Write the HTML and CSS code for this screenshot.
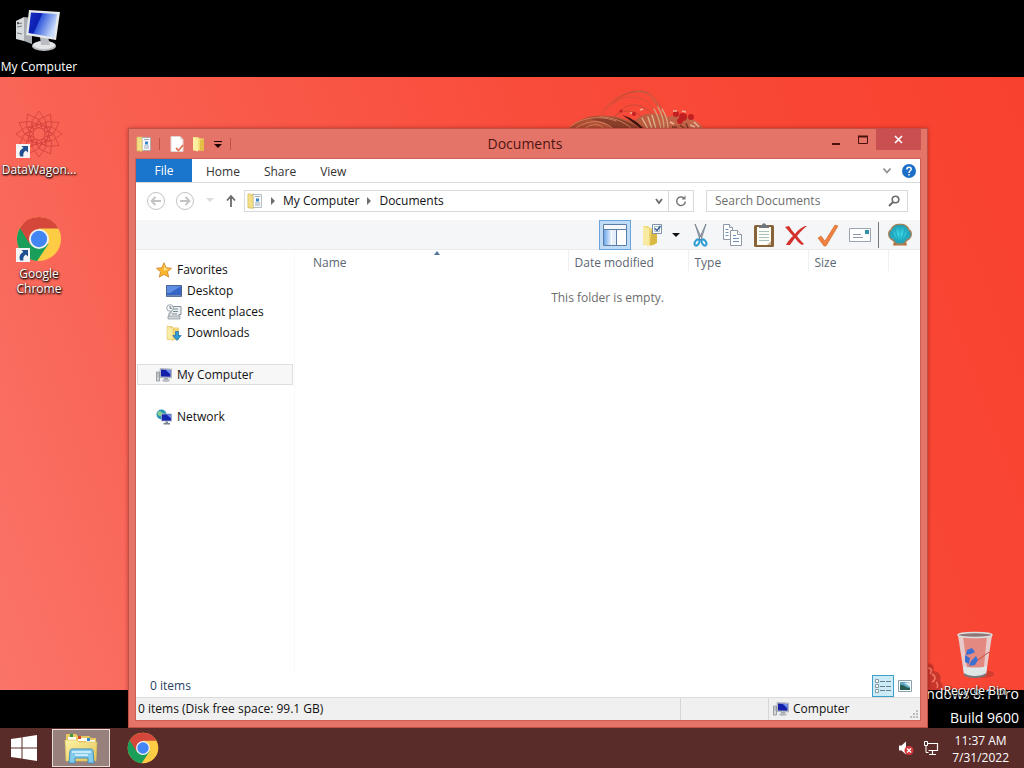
FILE: index.html
```html
<!DOCTYPE html>
<html lang="en">
<head>
  <meta charset="UTF-8">
  <meta name="viewport" content="width=device-width, initial-scale=1.0">
  <title>Documents</title>
  <link rel="stylesheet" href="styles.css">
</head>
<body>
  <!-- shared icons -->
  <svg class="sprites" width="0" height="0" aria-hidden="true">
    <defs>
      <linearGradient id="screen" x1="0" y1="0" x2="1" y2="0.4">
        <stop offset="0" stop-color="#1a2fc4"/>
        <stop offset="0.42" stop-color="#0a1fb0"/>
        <stop offset="0.45" stop-color="#3058dc"/>
        <stop offset="1" stop-color="#c9ddfa"/>
      </linearGradient>
      <linearGradient id="folder" x1="0" y1="0" x2="1" y2="1">
        <stop offset="0" stop-color="#fdf3a8"/>
        <stop offset="1" stop-color="#e3c354"/>
      </linearGradient>
      <linearGradient id="pane" x1="0" y1="0" x2="1" y2="0">
        <stop offset="0" stop-color="#6fa6ea"/>
        <stop offset="1" stop-color="#e4effb"/>
      </linearGradient>
      <radialGradient id="shell" cx=".5" cy=".5" r=".6">
        <stop offset="0" stop-color="#3fdcec"/>
        <stop offset="1" stop-color="#128da6"/>
      </radialGradient>
      <linearGradient id="hair-fill" x1="0" y1="0" x2="1" y2="0">
        <stop offset="0" stop-color="#a9482e"/>
        <stop offset=".4" stop-color="#b8593c"/>
        <stop offset="1" stop-color="#c8694c"/>
      </linearGradient>
    </defs>
    <symbol id="i-folder" viewBox="0 0 16 16">
      <path d="M1 1h6v14H1z" fill="url(#folder)" stroke="#d8c069" stroke-width=".6"/>
      <path d="M6 1.500h8.500v13H6z" fill="#f6f8fa" stroke="#9aa3ad" stroke-width=".7"/>
      <path d="M8 3.500h5M8 10h5M8 12h5" stroke="#8a9bb0" stroke-width=".8"/>
      <path d="M9 5.500h3v3H9z" fill="#3b84c8"/>
      <path d="M1 1l5 2v12.500L1 14z" fill="#f3df86" stroke="#d2b95c" stroke-width=".5"/>
    </symbol>
    <symbol id="i-computer" viewBox="0 0 16 16">
      <path d="M.5 5h3v9h-3z" fill="#d5d8db" stroke="#7c8288" stroke-width=".7"/>
      <path d="M1.500 7h1M1.500 9h1" stroke="#555" stroke-width=".7"/>
      <path d="M4 1.500l11.500.5v9L4 10.500z" fill="#c5c9d0" stroke="#8b9098" stroke-width=".5"/>
      <path d="M5 2.500l9.500.500v6.800L5 9.500z" fill="#1420a8"/>
      <path d="M9.500 2.800l5 .2v4.500z" fill="#6f8ff0"/>
      <path d="M8 11h4v2H8z" fill="#a4a8ad"/>
      <ellipse cx="10" cy="13.600" rx="4" ry="1.300" fill="#b9bdc2"/>
    </symbol>
    <symbol id="i-chrome" viewBox="0 0 48 48">
      <circle cx="24" cy="24" r="23" fill="#fdcb44"/>
      <path d="M24 24L4.100 12.500A23 23 0 0 0 22 46.900L34 29z" fill="#1a9f5b"/>
      <path d="M24 13h20.200A23 23 0 0 0 4.100 12.500L14.500 29.500z" fill="#d4473a"/>
      <circle cx="24" cy="24" r="10.500" fill="#f1f1f1"/>
      <circle cx="24" cy="24" r="8.500" fill="#4285f4"/>
    </symbol>
    <symbol id="i-shortcut" viewBox="0 0 14 14">
      <path d="M0 0h14v14H0z" fill="#f4f4f4"/>
      <path d="M5.500 2H12v6.500L9.800 6.400C7.500 8 7 9.700 7.400 12.500H4.200C2.600 8.800 4 5.600 7.400 4.100z" fill="#1e4f8f"/>
    </symbol>
  </svg>

  <main class="desktop">
    <div class="wallpaper">
      <svg class="hair" width="144" height="42" viewBox="0 0 144 42" aria-hidden="true">
        <path d="M4 42C14 31 30 27 44 29C54 28 62 34 70 34C78 26 90 24 104 30C118 26 134 32 140 42z" fill="url(#hair-fill)"/>
        <path d="M26 32C42 27 64 32 76 42H50C44 36 36 34 26 32z" fill="#8a3f2a"/>
        <g fill="none" stroke-linecap="round" stroke-width=".8">
          <path d="M6 40C18 30 36 28 52 34M12 41C24 33 38 32 48 41M20 42C28 36 36 36 40 42M36 30C48 30 60 34 68 42" stroke="#d98a68"/>
          <path d="M38 28C42 14 62 3 78 4C90 6 98 18 102 34" stroke="#c5543c"/>
          <path d="M42 22C54 10 66 8 78 12C88 16 92 26 94 38" stroke="#c5543c"/>
          <path d="M48 17C58 6 74 2 84 6M54 26C64 14 78 16 90 28M50 30C58 22 70 22 78 30" stroke="#b84b34"/>
          <path d="M70 5C84 2 94 12 100 34M88 12C94 18 98 26 101 38" stroke="#b4694a"/>
          <path d="M98 22C102 28 104 34 104 42M94 20C98 27 100 34 100 42M90 22C95 30 96 36 97 42" stroke="#d8a07a" stroke-width="1.400"/>
          <path d="M78 31L84 42M84 30L88 42M88 28L92 42" stroke="#ddb08c" stroke-width="1.400"/>
        </g>
        <path d="M58 28C66 30 74 35 80 42h-3C71 37 65 32 58 28z" fill="#3f1410"/>
        <g fill="#c21f22">
          <circle cx="112" cy="27" r="3"/><circle cx="119" cy="30" r="4"/><circle cx="116" cy="34" r="3"/><circle cx="127" cy="30" r="3"/><circle cx="57" cy="24" r="1.500"/><circle cx="70" cy="27" r="2"/>
        </g>
        <path d="M109 24h4M118 24l4 1M106 35l4 2M126 38l5 2M130 35l5 5M76 23l3-1M66 26h2" stroke="#eeb49c" stroke-width="1.500"/>
        <path d="M116 38l4 3M122 36l2 5M108 40h5" stroke="#7c3a28" stroke-width="1.500"/>
      </svg>
      <svg class="petals" width="18" height="30" viewBox="0 0 18 30" aria-hidden="true">
        <path d="M0 4c8-2 9 4 7 7c7 0 9 6 7 10c3 3 3 6 2 9H0z" fill="#c9362b"/>
        <path d="M2 8c4 0 4 4 2 6M6 14c4 2 4 6 0 8M10 22c2 2 2 4 1 6" stroke="#f07864" fill="none" stroke-width="1.500"/>
      </svg>
    </div>

    <p class="watermark">Windows 8.1 Pro<br>Build 9600</p>

    <a href="#" class="shortcut my-computer">
      <svg width="48" height="48" viewBox="0 0 48 48" aria-hidden="true">
        <path d="M1 14l8-4v24l-8-2z" fill="#d9dcdf"/>
        <path d="M9 10l8 1v26l-8-3z" fill="#a9adb1"/>
        <path d="M2 17l5-1M2 20l5-1M2 26l5 1" stroke="#777"/>
        <circle cx="3" cy="16" r="1" fill="#333"/>
        <ellipse cx="29" cy="39" rx="12" ry="5" fill="#b9bcbf"/>
        <ellipse cx="29" cy="38" rx="11" ry="4" fill="#e4e5e6"/>
        <path d="M25 30h8l2 8h-9z" fill="#b9bcc0"/>
        <path d="M14 3l31 2l-4 28l-30-5z" fill="#e7e9eb"/>
        <path d="M16 5.500l26 1.600l-3 23.500L13.500 26z" fill="url(#screen)"/>
      </svg>
      <span>My Computer</span>
    </a>

    <a href="#" class="shortcut datawagon">
      <svg width="48" height="48" viewBox="0 0 48 48" aria-hidden="true">
        <g fill="none" stroke="#d8433f" stroke-width=".8">
          <g id="petal-star">
            <path d="M24 18l-7-7l7-10l7 10zM24 30l-7 7l7 10l7-10zM18 24l-7 7l-10-7l10-7zM30 24l7 7l10-7l-10-7z"/>
            <path d="M24 24m-13 0l13-13l13 13l-13 13z"/>
          </g>
          <use href="#petal-star" transform="rotate(30 24 24)"/>
          <use href="#petal-star" transform="rotate(60 24 24)"/>
          <circle cx="24" cy="24" r="6"/>
        </g>
        <use href="#i-shortcut" x="1" y="34" width="14" height="14"/>
      </svg>
      <span>DataWagon...</span>
    </a>

    <a href="#" class="shortcut chrome">
      <svg width="48" height="48" viewBox="0 0 48 48" aria-hidden="true">
        <use href="#i-chrome" x="1" y="2" width="46" height="46"/>
        <use href="#i-shortcut" x="1" y="34" width="14" height="14"/>
      </svg>
      <span>Google Chrome</span>
    </a>

    <a href="#" class="shortcut recycle">
      <svg width="48" height="48" viewBox="0 0 48 48" aria-hidden="true">
        <ellipse cx="30" cy="43" rx="13" ry="4" fill="#a8362b" opacity=".5"/>
        <path d="M7 4h34l-6 39c-5 4-17 4-22 0z" fill="#dd9a96" opacity=".8"/>
        <path d="M7 4l6 39l4 2L12 5zM41 4l-6 39l-3 2l4-40z" fill="#e9e6e8" opacity=".7"/>
        <path d="M12 35c5 2 18 2 24 0l-1 8c-5 4-17 4-22 0z" fill="#dfe7e6"/>
        <path d="M13 43c5 4 17 4 22 0" stroke="#77787b" stroke-width="2" fill="none"/>
        <ellipse cx="24" cy="4" rx="17" ry="2.500" fill="#8d7675" stroke="#dcdddd" stroke-width="1.500"/>
        <path d="M16 19l5-2l3 4l-4 2l-5 1zM14 24l5 3l-1 6l-4-2zM20 30l5-5l2 4l-3 5l-6 1z" fill="#3b6fd0"/>
        <path d="M27 29c4-2 8-7 12-8" stroke="#c44a40" fill="none"/>
      </svg>
      <span>Recycle Bin</span>
    </a>

    <section class="window">
      <header class="titlebar">
        <div class="quick-access">
          <svg width="16" height="16" aria-hidden="true"><use href="#i-folder"/></svg>
          <i class="divider"></i>
          <button aria-label="Properties">
            <svg width="16" height="16" viewBox="0 0 16 16">
              <path d="M2 .5h9l3 3v12H2z" fill="#fff" stroke="#e2d3cf"/>
              <path d="M11 .5v3h3" fill="#ddd"/>
              <path d="M7 12l2.500 2.500L14 9" fill="none" stroke="#e07a5c" stroke-width="1.800"/>
            </svg>
          </button>
          <button aria-label="New folder">
            <svg width="16" height="16" viewBox="0 0 16 16">
              <path d="M2 1h5l2 1.500h4v12H2z" fill="#f3dc78"/>
              <path d="M2 1l5 2v12.500L2 14z" fill="#fdf0a0"/>
              <path d="M9 4l4-1.500v12L9 15z" fill="#e4bf48"/>
            </svg>
          </button>
          <button class="customize" aria-label="Customize toolbar">
            <svg width="8" height="8" viewBox="0 0 8 8"><path d="M0 1.500h8" stroke="#200"/><path d="M0 4h8L4 8z" fill="#200"/></svg>
          </button>
          <i class="divider"></i>
        </div>
        <h1>Documents</h1>
        <div class="window-controls">
          <button aria-label="Minimize"><svg width="10" height="10"><path d="M1 9h8" stroke="#4a100c" stroke-width="2"/></svg></button>
          <button aria-label="Maximize"><svg width="12" height="10"><path d="M1.500 1.500h9v7h-9z" fill="none" stroke="#4a100c"/><path d="M1 1.500h10" stroke="#4a100c" stroke-width="2"/></svg></button>
          <button class="close" aria-label="Close"><svg width="9" height="9"><path d="M1 1l7 7M8 1l-7 7" stroke="#fff" stroke-width="1.600"/></svg></button>
        </div>
      </header>

      <div class="window-body">
        <nav class="tabs">
          <a href="#" class="file">File</a>
          <a href="#">Home</a>
          <a href="#">Share</a>
          <a href="#">View</a>
          <div class="tabs-end">
            <button aria-label="Expand the ribbon"><svg width="10" height="8"><path d="M1.500 1.500L5 5.500l3.500-4" fill="none" stroke="#8f8f8f" stroke-width="1.800"/></svg></button>
            <button aria-label="Help">
              <svg width="14" height="14" viewBox="0 0 14 14"><circle cx="7" cy="7" r="7" fill="#1c6fc8"/><path d="M4.800 5.400C4.800 2.400 9.400 2.500 9.200 5.200C9.100 6.800 7 6.900 7 9M7 10v1.600" fill="none" stroke="#fff" stroke-width="1.500"/></svg>
            </button>
          </div>
        </nav>

        <div class="navbar">
          <button aria-label="Back"><svg width="20" height="20" viewBox="0 0 20 20" fill="none" stroke="#c3c3c3"><circle cx="10" cy="10" r="8.500"/><path d="M15 10H6M9.500 6l-4 4l4 4" stroke-width="1.800"/></svg></button>
          <button aria-label="Forward"><svg width="20" height="20" viewBox="0 0 20 20" fill="none" stroke="#c3c3c3"><circle cx="10" cy="10" r="8.500"/><path d="M5 10h9M10.500 6l4 4l-4 4" stroke-width="1.800"/></svg></button>
          <button class="recent" aria-label="Recent locations"><svg width="8" height="5"><path d="M0 0h8L4 4z" fill="#dcdcdc"/></svg></button>
          <button class="up" aria-label="Up"><svg width="12" height="14" viewBox="0 0 12 14"><path d="M6 13V2M2 6.500L6 2l4 4.500" fill="none" stroke="#6b6b6b" stroke-width="1.800"/></svg></button>
          <div class="address">
            <svg width="16" height="16" aria-hidden="true"><use href="#i-folder"/></svg>
            <svg class="crumb-arrow" width="4" height="8"><path d="M0 0l4 4l-4 4z" fill="#6f6f6f"/></svg>
            <a href="#">My Computer</a>
            <svg class="crumb-arrow" width="4" height="8"><path d="M0 0l4 4l-4 4z" fill="#6f6f6f"/></svg>
            <a href="#">Documents</a>
            <button class="history" aria-label="Previous locations"><svg width="8" height="8"><path d="M1 2l3 4l3-4" fill="none" stroke="#6b6b6b" stroke-width="1.800"/></svg></button>
            <button class="refresh" aria-label="Refresh"><svg width="12" height="12" viewBox="0 0 12 12"><path d="M8.800 3A4.300 4.300 0 1 0 10.300 6.500" fill="none" stroke="#777" stroke-width="1.500"/><path d="M6.500 4.500h4v-4z" fill="#777"/></svg></button>
          </div>
          <label class="search">
            <input type="text" placeholder="Search Documents" aria-label="Search Documents">
            <svg width="12" height="12" viewBox="0 0 12 12" aria-hidden="true"><circle cx="7.500" cy="4.500" r="3.300" fill="none" stroke="#6b6b6b" stroke-width="1.600"/><path d="M5 7L1 11" stroke="#6b6b6b" stroke-width="2"/></svg>
          </label>
        </div>

        <div class="toolbar">
          <button class="active" aria-label="Navigation pane">
            <svg width="24" height="22" viewBox="0 0 24 22"><path d="M.5.500h23v21H.5z" fill="#fff" stroke="#5b7da6"/><path d="M1 1h22v4H1z" fill="#f4f8fc"/><path d="M1 5.500h22M13.500 5.500v16" stroke="#5b7da6"/><path d="M1 6h7v15H1z" fill="url(#pane)"/><path d="M9 6h4v15H9z" fill="#e4effb"/></svg>
          </button>
          <button aria-label="Select all">
            <svg width="24" height="24" viewBox="0 0 24 24"><path d="M3 3h5l2 2h5v17H3z" fill="#efd977"/><path d="M3 3l6 3v18l-6-3z" fill="#f8eaa2"/><path d="M11 8l6-2v14l-7 3z" fill="#d9b944"/><path d="M12.500 1.500h9v9h-9z" fill="#fff" stroke="#7c93ac"/><path d="M14.500 3.500h5v5h-5z" fill="none" stroke="#a9bac9"/><path d="M15 5.500l2 2l3.500-4.500" fill="none" stroke="#2d5a92" stroke-width="1.400"/></svg>
          </button>
          <button class="narrow" aria-label="Select options"><svg width="8" height="4"><path d="M0 0h8L4 4z" fill="#111"/></svg></button>
          <button aria-label="Cut">
            <svg width="24" height="24" viewBox="0 0 24 24"><path d="M7 1l7 15l-2 1zM18 1l-7 15l2 1z" fill="#a3afbb" stroke="#657483" stroke-width=".7"/><g fill="none" stroke="#2a9bd3" stroke-width="2"><ellipse cx="9" cy="19.500" rx="2" ry="3.300" transform="rotate(30 9 19.500)"/><ellipse cx="16" cy="19.500" rx="2" ry="3.300" transform="rotate(-30 16 19.500)"/></g></svg>
          </button>
          <button aria-label="Copy">
            <svg width="24" height="24" viewBox="0 0 24 24"><g fill="#fff" stroke="#8c99a6"><path d="M3.500 1.500h6l3 3v12h-9z"/><path d="M9.500 1.500v3h3"/><path d="M10.500 7.500h7l4 4v11h-11z"/><path d="M17.500 7.500v4h4"/></g><path d="M5.500 6.500h3M5.500 9.500h3M5.500 12.500h3M13 12.500h3M13 15.500h6M13 18.500h6" stroke="#7193bd"/></svg>
          </button>
          <button aria-label="Paste">
            <svg width="24" height="24" viewBox="0 0 24 24"><rect x="2" y="2" width="20" height="22" rx="1.500" fill="#8a6238"/><path d="M5 4h14v18H5z" fill="#fdfcf5"/><path d="M7 8.500h10M7 11.500h10M7 14.500h10M7 17.500h10" stroke="#a9c0be"/><path d="M7 5V2.500h3c0-3 4-3 4 0h3V5z" fill="#6f777e"/><path d="M15 22l4-4v4z" fill="#cbb99d"/></svg>
          </button>
          <button aria-label="Delete">
            <svg width="24" height="24" viewBox="0 0 24 24"><path d="M1 4l4-1c2 3 4 6 6 8c3-4 6-6 10-8l2 0c-4 3-7 6-10 10c2 3 4 5 7 8l-2 1c-3-2-5-4-7-7c-2 3-4 5-5 7l-4 0c2-4 4-6 7-9C6 10 4 7 1 4z" fill="#d3302b"/></svg>
          </button>
          <button aria-label="Properties">
            <svg width="24" height="24" viewBox="0 0 24 24"><path d="M2 15l3-2l4 5L19 2l3 1L10 23H8z" fill="#ee8140" stroke="#cc6a2e" stroke-width=".6"/></svg>
          </button>
          <button aria-label="Email">
            <svg width="24" height="24" viewBox="0 0 24 24"><path d="M1.500 5.500h21v13h-21z" fill="#fff" stroke="#9aa5b1"/><path d="M17 7h4v4h-4z" fill="#2f91a7"/><path d="M5 11.500h8M5 14.500h10" stroke="#8d99a8"/></svg>
          </button>
          <i class="tool-divider"></i>
          <button aria-label="Classic Shell Settings">
            <svg width="24" height="24" viewBox="0 0 24 24"><path d="M6 18.500h12l1 4H5z" fill="#b0703c"/><path d="M3 16C0 14 0 8 3 7C4 3 8 1 12 1.500C16 1 20 3 21 7C24 8 24 14 21 16C18 17 17 20 15 21H9C7 20 6 17 3 16z" fill="url(#shell)" stroke="#a5835c" stroke-width="1.400"/><path d="M12 19V4M10.500 19L7 6M13.500 19L17 6M9 18L3.500 10M15 18L20.500 10" stroke="#1b9fb6" stroke-width=".8"/></svg>
          </button>
        </div>

        <div class="content">
          <aside class="tree">
            <a href="#"><svg width="16" height="16" viewBox="0 0 16 16"><path d="M8 .8l2.200 4.900l5.300.6l-4 3.500l1.200 5.300L8 12.400l-4.700 2.700l1.200-5.300l-4-3.500l5.300-.6z" fill="#fbb62e" stroke="#c98128" stroke-width=".8"/><path d="M8 3l1.500 3.500l3 .5L8 9z" fill="#ffe590"/></svg>Favorites</a>
            <a href="#" class="child"><svg width="16" height="16" viewBox="0 0 16 16"><path d="M.5 2.500h15v11H.5z" fill="#3767c6" stroke="#4c648f"/><path d="M1 3h14L4 10H1z" fill="#5f8fe4"/><path d="M1 12h14v1.500H1z" fill="#6d87b0"/></svg>Desktop</a>
            <a href="#" class="child"><svg width="16" height="16" viewBox="0 0 16 16"><path d="M5 2.500h10v8H13v3.500H3V9h2z" fill="#edf0f1" stroke="#86929a"/><path d="M7 5h5M7 7.500h5M6 10h5" stroke="#7a8a93"/><path d="M2 12h12v3H2z" fill="#cfd6d9" stroke="#86929a" stroke-width=".7"/><circle cx="4" cy="4" r="3.300" fill="#f7f9fa" stroke="#86929a" stroke-width=".8"/><path d="M4 2v2.300h2" stroke="#557" fill="none" stroke-width=".8"/></svg>Recent places</a>
            <a href="#" class="child"><svg width="16" height="16" viewBox="0 0 16 16"><path d="M1 1h5l1.500 1.500H13V15H1z" fill="#efd478"/><path d="M1 1l6 2v12.500L1 14z" fill="#fbeca4" stroke="#d7bc62" stroke-width=".5"/><path d="M9.500 6.500h3v4h2.700L11 15.500l-4.200-5h2.700z" fill="#2f9ad6" stroke="#1b6fa5" stroke-width=".7"/></svg>Downloads</a>
            <a href="#" class="group selected"><svg width="16" height="16"><use href="#i-computer"/></svg>My Computer</a>
            <a href="#" class="group"><svg width="16" height="16" viewBox="0 0 16 16"><circle cx="5.500" cy="5.500" r="5" fill="#2b97b5"/><path d="M2 3c3-2 3 1 5 1S6 8 4 7S1 6 2 3z" fill="#8ed38a"/><path d="M5.500 5h10v7h-10z" fill="#1727b0" stroke="#aab4c6" stroke-width=".8"/><path d="M10.500 5.500H15v4z" fill="#6d8cf0"/><path d="M9.500 12.500h2.500v1.500h2v1.500H7.500V14h2z" fill="#7a8490"/></svg>Network</a>
          </aside>

          <div class="files">
            <table>
              <thead>
                <tr><th class="name"><svg class="sort" width="6" height="4" aria-hidden="true"><path d="M0 4l3-4l3 4z" fill="#51749c"/></svg>Name</th><th class="date">Date modified</th><th class="type">Type</th><th class="size">Size</th><th></th></tr>
              </thead>
              <tbody>
                <tr><td colspan="5">This folder is empty.</td></tr>
              </tbody>
            </table>
          </div>
        </div>

        <div class="details">
          <span>0 items</span>
          <button class="active" aria-label="Details view"><svg width="16" height="14" viewBox="0 0 16 14"><g fill="#fff" stroke="#8798a2"><path d="M.5.500h3v3h-3zM.5 5.500h3v3h-3zM.5 10.500h3v3h-3z"/></g><path d="M5 2.500h5M11 2.500h5M5 7.500h5M11 7.500h5M5 11.500h5M11 11.500h5" stroke="#6b7d88"/></svg></button>
          <button aria-label="Thumbnail view"><svg width="14" height="12" viewBox="0 0 14 12"><path d="M.5.500h13v11H.5z" fill="#fff" stroke="#8aa0ad"/><path d="M2 2h10v8H2z" fill="#5fa7c4"/><path d="M2 5c4-1 5 3 10 3v2H2z" fill="#255d52"/><path d="M6 3l6-1v5z" fill="#d4ecf3"/></svg></button>
        </div>

        <footer class="statusbar">
          <span class="space">0 items (Disk free space: 99.1 GB)</span>
          <span class="blank"></span>
          <span class="zone"><svg width="16" height="16" aria-hidden="true"><use href="#i-computer"/></svg>Computer</span>
          <svg class="grip" width="9" height="9" aria-hidden="true"><path d="M6 0h2v2H6zM3 3h2v2H3zM6 3h2v2H6zM0 6h2v2H0zM3 6h2v2H3zM6 6h2v2H6z" fill="#bdbdbd"/></svg>
        </footer>
      </div>
    </section>
  </main>

  <footer class="taskbar">
    <button class="start" aria-label="Start">
      <svg width="26" height="26" viewBox="0 0 26 26"><path d="M0 4l10.500-1.500v10H0zM11.500 2.300L26 0v12.500H11.500zM0 13.500h10.500v10L0 22zM11.500 13.500H26V26l-14.500-2.300z" fill="#fff"/></svg>
    </button>
    <button class="task active" aria-label="File Explorer">
      <svg width="34" height="32" viewBox="0 0 34 32">
        <path d="M2 2h10l2 2h11l2 2h5v22H2z" fill="#e9c95e"/>
        <path d="M4 5h8v3H4zM14 6h9v3h-9zM22 8h9v3h-9z" fill="#fff"/>
        <path d="M6 2h3v3H6z" fill="#3c9a3d"/><path d="M14 4h3v3h-3z" fill="#d34a2c"/><path d="M23 6h3v3h-3z" fill="#2f85cf"/>
        <path d="M1 8h12l2 2h18l-1 19H2z" fill="url(#folder)" stroke="#d9bd58" stroke-width=".6"/>
        <path d="M5 31l1-12c0-1 1-2 2-2h19c1 0 2 1 2 2l1 12h-6v-5H11v5z" fill="#83cbed" stroke="#418fc0"/>
        <path d="M8 20h19M11 23h13" stroke="#dff5fc" stroke-width="1.500"/>
      </svg>
    </button>
    <button class="task" aria-label="Google Chrome"><svg width="32" height="32"><use href="#i-chrome"/></svg></button>
    <div class="tray">
      <button aria-label="Volume muted"><svg width="16" height="16" viewBox="0 0 16 16"><path d="M1 5.500h2.500L8 1.500v13L3.500 10.500H1z" fill="#fff"/><circle cx="11" cy="10.500" r="4.500" fill="#d5383c"/><path d="M9 8.500l4 4M13 8.500l-4 4" stroke="#fff" stroke-width="1.300"/></svg></button>
      <button aria-label="Network"><svg width="16" height="16" viewBox="0 0 16 16" fill="none" stroke="#fff"><path d="M5 3.500h9.500v7H5.500M9.500 11v3M6 14.500h7" stroke-width="1.200"/><path d="M1.500 1.500h3v4h-3zM3 5.500v7h2.500"/></svg></button>
      <time datetime="2022-07-31T11:37">11:37 AM<br>7/31/2022</time>
    </div>
  </footer>
</body>
</html>
```
FILE: styles.css
```css
:root {
  --frame: #e57468;
  --frame-edge: #c14f47;
  --line: #d9d9d9;
  --taskbar: #5a2c29;
}

* {
  box-sizing: border-box;
}

body {
  margin: 0;
  min-height: 100vh;
  display: flex;
  flex-direction: column;
  background: #000;
  font-family: "Open Sans", "Noto Sans", sans-serif;
  font-size: 12px;
  line-height: 16px;
  color: #111;
}

button {
  display: flex;
  align-items: center;
  justify-content: center;
  margin: 0;
  padding: 0;
  border: 0;
  background: none;
  font: inherit;
}

a {
  color: inherit;
  text-decoration: none;
}

svg {
  display: block;
  flex: none;
}

.sprites {
  position: absolute;
}

/* desktop */
.desktop {
  position: relative;
  flex: 1;
  overflow: hidden;
}

.wallpaper {
  position: absolute;
  top: 77px;
  left: 0;
  right: 0;
  bottom: 38px;
  background: linear-gradient(70deg, #fa7468 0%, #f96253 22%, #f94c3b 60%, #f9412e 100%);
}

.hair {
  position: absolute;
  top: 10px;
  left: 564px;
}

.petals {
  position: absolute;
  bottom: 0;
  left: 926px;
}

.watermark {
  position: absolute;
  right: 5px;
  bottom: -2px;
  margin: 0;
  font-size: 14px;
  line-height: 24px;
  text-align: right;
  color: #fff;
}

.shortcut {
  position: absolute;
  width: 78px;
  display: flex;
  flex-direction: column;
  align-items: center;
  gap: 4px;
  line-height: 15px;
  text-align: center;
  color: #fff;
  text-shadow: 1px 1px 2px #000, 0 1px 2px #000;
}

.my-computer {
  top: 7px;
  left: 0;
}

.datawagon {
  top: 110px;
  left: 0;
}

.chrome {
  top: 214px;
  left: 0;
}

.chrome span {
  width: 60px;
}

.recycle {
  top: 631px;
  right: 10px;
}

/* explorer window */
.window {
  position: absolute;
  top: 128px;
  left: 128px;
  right: 96px;
  bottom: 0;
  display: flex;
  flex-direction: column;
  padding: 0 7px 7px;
  background: var(--frame);
  border: 1px solid var(--frame-edge);
  box-shadow: 0 0 4px rgba(90, 0, 0, 0.4);
}

.titlebar {
  display: grid;
  grid-template-columns: 1fr auto 1fr;
  align-items: center;
  height: 30px;
}

.titlebar h1 {
  margin: 0 6px 0 0;
  font-size: 14px;
  font-weight: normal;
  color: #4d1512;
}

.quick-access {
  display: flex;
  align-items: center;
  gap: 6px;
}

.divider {
  width: 1px;
  height: 12px;
  margin: 0 3px 0 1px;
  background: #c05046;
}

.customize {
  width: 10px;
}

.window-controls {
  display: flex;
  align-self: start;
  justify-content: flex-end;
  margin-right: -1px;
}

.window-controls button {
  width: 27px;
  height: 21px;
}

.window-controls .close {
  width: 45px;
  background: #c94f50;
}

.window-body {
  flex: 1;
  display: flex;
  flex-direction: column;
  background: #fff;
  outline: 1px solid #cf5f55;
}

.tabs {
  display: flex;
  height: 24px;
  border-bottom: 1px solid var(--line);
  color: #333;
}

.tabs a {
  padding: 5px 12px 0;
}

.tabs .file {
  width: 56px;
  margin-right: 2px;
  padding: 4px 0 0;
  text-align: center;
  background: #1a76cc;
  color: #fff;
}

.tabs-end {
  display: flex;
  align-items: center;
  gap: 10px;
  margin-left: auto;
  padding-right: 4px;
}

.navbar {
  display: flex;
  align-items: center;
  height: 37px;
  padding: 0 12px 2px 10px;
}

.navbar > button {
  width: 20px;
  margin-right: 9px;
}

.navbar > .recent {
  width: 12px;
  margin-right: 8px;
}

.navbar > .up {
  width: 14px;
  margin-right: 6px;
}

.address {
  flex: 1;
  display: flex;
  align-items: center;
  height: 22px;
  padding-left: 2px;
  border: 1px solid var(--line);
}

.crumb-arrow {
  margin: 0 8px;
}

.address .history {
  width: 18px;
  height: 100%;
  margin-left: auto;
}

.address .refresh {
  width: 25px;
  height: 100%;
  border-left: 1px solid var(--line);
}

.search {
  display: flex;
  align-items: center;
  width: 202px;
  height: 22px;
  margin-left: 12px;
  padding: 0 7px 0 8px;
  border: 1px solid var(--line);
}

.search input {
  flex: 1;
  min-width: 0;
  padding: 0;
  border: 0;
  outline: 0;
  background: none;
  font: inherit;
}

.search input::placeholder {
  color: #6d6d6d;
}

.toolbar {
  display: flex;
  justify-content: flex-end;
  height: 30px;
  padding-right: 4px;
  background: #f5f6f7;
  border-bottom: 1px solid #e8eaec;
}

.toolbar button {
  width: 32px;
  height: 30px;
}

.toolbar .narrow {
  width: 16px;
}

.toolbar .active {
  margin-right: 5px;
  background: #bfdcf7;
  border: 1px solid #6ba4dc;
}

.tool-divider {
  width: 1px;
  height: 26px;
  margin: 2px 5px 0 2px;
  background: #777;
}

.content {
  flex: 1;
  display: flex;
}

.tree {
  width: 159px;
  padding: 9px 1px 0;
  border-right: 1px solid #f9f9f9;
}

.tree a {
  display: flex;
  align-items: center;
  gap: 5px;
  height: 21px;
  padding-left: 19px;
}

.tree .child {
  padding-left: 29px;
}

.tree .group {
  margin-top: 21px;
}

.tree .selected {
  padding-left: 18px;
  background: #f7f7f7;
  border: 1px solid #dedede;
}

.files {
  flex: 1;
}

.files table {
  width: 100%;
  border-collapse: collapse;
  table-layout: fixed;
}

.files th {
  position: relative;
  height: 20px;
  padding: 5px 6px 0;
  border-right: 1px solid #f0f0f0;
  font-weight: normal;
  text-align: left;
  color: #5c6672;
}

.files th:last-child {
  border: 0;
}

.files .name {
  width: 273px;
  padding-left: 18px;
}

.files .date,
.files .type {
  width: 120px;
}

.files .size {
  width: 80px;
}

.sort {
  position: absolute;
  top: 1px;
  left: 139px;
}

.files td {
  padding: 19px 0;
  text-align: center;
  color: #6d6d6d;
}

.details {
  display: flex;
  align-items: center;
  height: 24px;
  padding: 1px 4px 0 14px;
  color: #2b3f66;
}

.details span {
  flex: 1;
}

.details button {
  width: 22px;
  height: 22px;
}

.details .active {
  background: #cbebf8;
  border: 1px solid #3f9fc9;
}

.statusbar {
  display: flex;
  height: 23px;
  background: #f0f0f0;
  border-top: 1px solid #dcdcdc;
}

.statusbar span {
  display: flex;
  align-items: center;
  gap: 4px;
  padding-left: 2px;
}

.statusbar .space {
  flex: 1;
}

.statusbar .blank {
  width: 88px;
  border-left: 1px solid #d7d7d7;
}

.statusbar .zone {
  width: 142px;
  padding-left: 4px;
  border-left: 1px solid #d7d7d7;
}

.grip {
  align-self: flex-end;
  margin: 0 1px 1px 0;
}

/* taskbar */
.taskbar {
  display: flex;
  align-items: center;
  height: 40px;
  background: var(--taskbar);
  color: #fff;
}

.start {
  width: 48px;
  height: 40px;
  margin-right: 4px;
}

.task {
  width: 58px;
  height: 38px;
  margin-right: 4px;
}

.task.active {
  background: #98807d;
  border: 1px solid #e6dcda;
}

.tray {
  display: flex;
  align-items: center;
  gap: 9px;
  margin-left: auto;
  padding-right: 15px;
}

.tray time {
  margin-left: 4px;
  padding-top: 2px;
  line-height: 17px;
  text-align: center;
}
```
